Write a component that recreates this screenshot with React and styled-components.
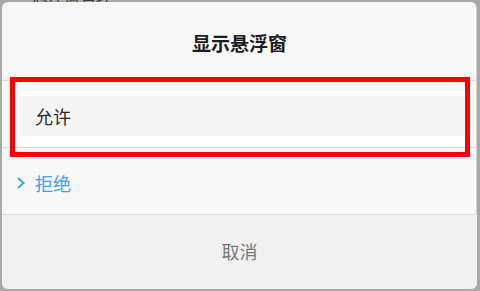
import React from 'react';
import styled, { createGlobalStyle } from 'styled-components';

const GlobalStyle = createGlobalStyle`
    html, body {
        margin: 0;
        padding: 0;
        background: #a9a9a9;
        font-family: 'Noto Sans CJK SC', 'Noto Sans', sans-serif;
    }
`;

const Backdrop = styled.div`
    width: 480px;
    height: 291px;
    padding: 0 3px 0 2px;
    box-sizing: border-box;
    overflow: hidden;
`;

const Peek = styled.div`
    height: 2px;
    overflow: hidden;
    display: flex;
    align-items: flex-end;
    padding-left: 30px;

    span {
        font-size: 16px;
        line-height: 14px;
        color: #3a3a3a;
    }
`;

const Dialog = styled.div`
    position: relative;
    height: 287px;
    background: #f7f7f7;
    border-radius: 6px;
    overflow: hidden;
    display: flex;
    flex-direction: column;
    box-shadow: inset 0 -1px 0 #c4c4c4, inset -1px 0 0 #d0d0d0;
`;

const Title = styled.div`
    height: 79px;
    display: flex;
    align-items: center;
    justify-content: center;
    padding-top: 3px;
    box-sizing: border-box;
    font-size: 19px;
    font-weight: 700;
    color: #1c1c1c;
    border-bottom: 1px solid #dcdcdc;
`;

const OptionRow = styled.div`
    height: 67px;
    box-sizing: border-box;
    border-bottom: 1px solid #dcdcdc;
    padding: 10px 6px 2px 12px;
`;

const OptionCard = styled.div`
    background: #ffffff;
    padding: 5px 0 10px 5px;
`;

const OptionInner = styled.div`
    height: 40px;
    background: #f4f4f4;
    display: flex;
    align-items: center;
    padding-left: 16px;
    font-size: 18px;
    color: #2a2a2a;
`;

const ChoiceRow = styled.div`
    height: 67px;
    box-sizing: border-box;
    border-bottom: 1px solid #dcdcdc;
    display: flex;
    align-items: center;
    gap: 9px;
    padding: 3px 0 0 14px;
    font-size: 18px;
    color: ${p => p.$active ? '#3aa2ec' : '#2a2a2a'};

    svg {
        width: 10px;
        height: 12px;
    }
`;

const Footer = styled.div`
    flex: 1;
    background: #f1f1f1;
    display: flex;
    align-items: center;
    justify-content: center;
    padding-bottom: 2px;
    font-size: 18px;
    color: #777777;
`;

const Highlight = styled.div`
    position: absolute;
    left: 8px;
    top: 75px;
    width: 460px;
    height: 80px;
    border: 5px solid #ff0000;
    box-sizing: border-box;
    pointer-events: none;
`;

const Chevron = () => (
    <svg viewBox="0 0 10 12">
        <path d="M2 1 L7.5 6 L2 11" fill="none" stroke="#3aa2ec" strokeWidth="2" />
    </svg>
);

const App = () => {
    return (
        <>
            <GlobalStyle />
            <Backdrop>
                <Peek><span>悬浮窗管理</span></Peek>
                <Dialog>
                    <Title>显示悬浮窗</Title>
                    <OptionRow>
                        <OptionCard>
                            <OptionInner>允许</OptionInner>
                        </OptionCard>
                    </OptionRow>
                    <ChoiceRow $active>
                        <Chevron />
                        拒绝
                    </ChoiceRow>
                    <Footer>取消</Footer>
                    <Highlight />
                </Dialog>
            </Backdrop>
        </>
    );
}

export default App;
